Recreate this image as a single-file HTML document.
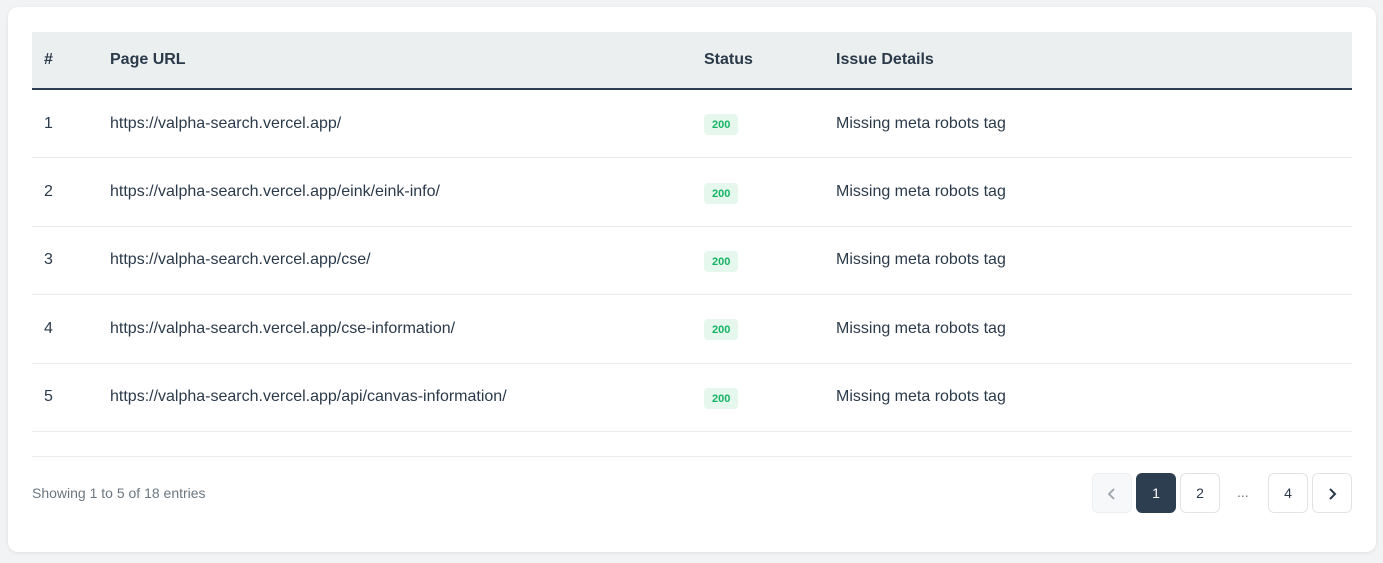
<!DOCTYPE html>
<html><head><style>
body{margin:0;background:#f1f3f5;font-family:"Liberation Sans",sans-serif;width:1383px;height:563px;overflow:hidden;position:relative}
.card{position:absolute;left:8px;top:7px;width:1368px;height:545px;background:#fff;border-radius:10px;box-shadow:0 1px 4px rgba(0,0,0,.08)}
table{position:absolute;left:24px;top:25px;width:1320px;border-collapse:collapse;color:#2b3a4a;font-size:16px}
th{background:#ebeff0;height:56px;text-align:left;font-weight:bold;font-size:16px;border-bottom:2px solid #2c3e50;padding:0}
td{height:67.4px;border-bottom:1px solid #e8ecef;padding:0}
.c1{padding-left:12px;width:66px}
.b{display:inline-block;background:#e6f7ee;color:#16b364;font-size:11px;font-weight:bold;padding:5px 8px 4px;border-radius:4px;margin-top:2px}
.foot{position:absolute;left:24px;top:449px;width:1320px;border-top:1px solid #e8ecef}
.info{position:absolute;left:24px;top:478px;font-size:14px;color:#6b7780}
.pg{position:absolute;top:466px;width:38px;height:38px;border:1px solid #e0e4e7;border-radius:6px;text-align:center;line-height:38px;font-size:14px;color:#2b3a4a;background:#fff}
</style></head><body>
<div class="card">
<table>
<tr><th class="c1">#</th><th style="width:594px">Page URL</th><th style="width:132px">Status</th><th>Issue Details</th></tr>
<tr><td class="c1">1</td><td>https://valpha-search.vercel.app/</td><td><span class="b">200</span></td><td>Missing meta robots tag</td></tr>
<tr><td class="c1">2</td><td>https://valpha-search.vercel.app/eink/eink-info/</td><td><span class="b">200</span></td><td>Missing meta robots tag</td></tr>
<tr><td class="c1">3</td><td>https://valpha-search.vercel.app/cse/</td><td><span class="b">200</span></td><td>Missing meta robots tag</td></tr>
<tr><td class="c1">4</td><td>https://valpha-search.vercel.app/cse-information/</td><td><span class="b">200</span></td><td>Missing meta robots tag</td></tr>
<tr><td class="c1">5</td><td>https://valpha-search.vercel.app/api/canvas-information/</td><td><span class="b">200</span></td><td>Missing meta robots tag</td></tr>
</table>
<div class="foot"></div>
<div class="info">Showing 1 to 5 of 18 entries</div>
<div class="pg" style="left:1084px;background:#f7f8f9;border-color:#eceff1"><svg width="14" height="14" viewBox="0 0 14 14" style="vertical-align:middle"><path d="M9 2L4 7l5 5" fill="none" stroke="#9aa3ab" stroke-width="1.8"/></svg></div>
<div class="pg" style="left:1128px;background:#2c3e50;border-color:#2c3e50;color:#fff">1</div>
<div class="pg" style="left:1172px">2</div>
<div style="position:absolute;left:1229px;top:477px;font-size:14px;color:#6b7780">...</div>
<div class="pg" style="left:1260px">4</div>
<div class="pg" style="left:1304px"><svg width="14" height="14" viewBox="0 0 14 14" style="vertical-align:middle"><path d="M5 2l5 5-5 5" fill="none" stroke="#2b3a4a" stroke-width="2"/></svg></div>
</div>
</body></html>
